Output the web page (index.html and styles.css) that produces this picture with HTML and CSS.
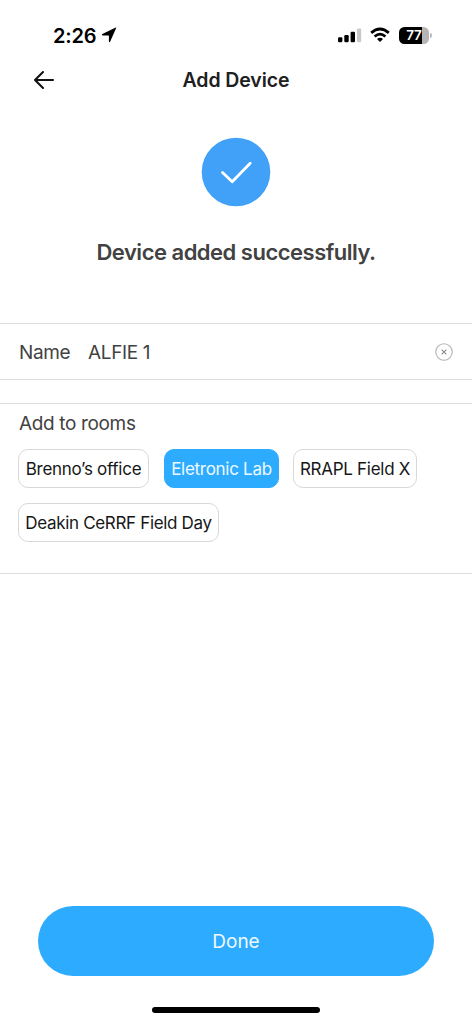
FILE: index.html
```html
<!DOCTYPE html>
<html lang="en">
<head>
<meta charset="utf-8">
<title>Add Device</title>
<link rel="stylesheet" href="styles.css">
</head>
<body>
<main class="screen">
  <div class="status">
    <span class="time">2:26</span>
    <svg class="location" width="16" height="16" viewBox="0 0 16 16"><path d="M15.2.9 9.2 14.6Q8.4 16 7.9 14.6V8.5H1.6Q0 8 1.4 7.1L14.2.7Q15.7.1 15.2.9Z"/></svg>
    <span class="spacer"></span>
    <svg class="signal" width="24" height="16" viewBox="0 0 24 16"><rect x="0" y="10.3" width="4.4" height="5" rx="1.2"/><rect x="6.3" y="8" width="4.4" height="7.3" rx="1.2"/><rect x="12.6" y="4.7" width="4.4" height="10.6" rx="1.2"/><rect class="faint" x="19" y="1.5" width="4.2" height="13.8" rx="1.2"/></svg>
    <svg class="wifi" width="20" height="16" viewBox="0 0 20 16"><path class="wave" d="M1.2 5.9Q10-1.8 18.8 5.9M4.6 9.5Q10 4.7 15.4 9.5"/><path d="M7 12.1Q10 9.3 13 12.1L10 15.1Z"/></svg>
    <div class="battery"><span>77</span></div>
    <i class="battery-tip"></i>
  </div>
  <header class="nav">
    <svg class="back" width="22" height="20" viewBox="0 0 22 20"><path d="M20 10H2M10 2 2 10l8 8"/></svg>
    <h1>Add Device</h1>
  </header>
  <section class="success">
    <svg class="check" width="70" height="70" viewBox="0 0 70 70"><circle cx="35" cy="35" r="34.3"/><path d="m21.5 35.5 9.7 9.3L49.2 26.2"/></svg>
    <h2>Device added successfully.</h2>
  </section>
  <section class="name-row">
    <label>Name</label>
    <span class="value">ALFIE 1</span>
    <svg class="clear" width="18" height="18" viewBox="0 0 18 18"><circle cx="9" cy="9" r="8.2"/><path d="m6.6 6.6 4.8 4.8m0-4.8-4.8 4.8"/></svg>
  </section>
  <section class="rooms">
    <h3>Add to rooms</h3>
    <div class="chips">
      <button class="chip brenno">Brenno’s office</button>
      <button class="chip selected">Eletronic Lab</button>
      <button class="chip field">RRAPL Field X</button>
      <button class="chip deakin">Deakin CeRRF Field Day</button>
    </div>
  </section>
  <footer class="footer">
    <button class="done">Done</button>
    <div class="home-bar"></div>
  </footer>
</main>
</body>
</html>
```
FILE: styles.css
```css
* { box-sizing: border-box; }
body { margin: 0; background: #fff; font-family: Inter, "Liberation Sans", sans-serif; color: #424242; }
button { font-family: inherit; padding: 0; }
h1, h2, h3 { margin: 0; }
svg { display: block; flex: none; }
.screen { width: 472px; height: 1023px; display: flex; flex-direction: column; overflow: hidden; }

.status { height: 58px; padding: 12px 40px 0 53px; display: flex; align-items: center; color: #000; }
.time { font-size: 20px; font-weight: 600; letter-spacing: -.2px; width: 48px; padding-top: 1px; white-space: nowrap; }
.spacer { flex: 1; }
.signal { margin-right: 8px; }
.faint { fill: #c9c9c9; }
.wifi { margin-right: 9px; }
.wave { fill: none; stroke: #000; stroke-width: 2.8; }
.battery { width: 30px; height: 17px; border-radius: 5.5px; background: linear-gradient(90deg, #000 77%, #b5b5b5 77%); color: #fff; font-size: 13.5px; font-weight: 600; line-height: 17px; text-align: center; letter-spacing: -.2px; }
.battery-tip { width: 2px; height: 5px; margin-left: 1px; border-radius: 0 2px 2px 0; background: #bbb; }

.nav { height: 44px; display: grid; grid-template-columns: 64px 1fr 64px; align-items: center; }
.back { margin-left: 33px; fill: none; stroke: #111; stroke-width: 2.1; stroke-linecap: round; stroke-linejoin: round; }
h1 { font-size: 19.5px; font-weight: 600; text-align: center; color: #202020; letter-spacing: -.1px; line-height: 24px; }

.success { height: 221px; padding-top: 35px; display: flex; flex-direction: column; align-items: center; }
.check { fill: #41a1f8; }
.check path { fill: none; stroke: #fff; stroke-width: 2.8; stroke-linecap: round; stroke-linejoin: round; }
h2 { margin-top: 31px; font-size: 22px; font-weight: 600; letter-spacing: -.5px; line-height: 28px; white-space: nowrap; }

.name-row { height: 57px; border-top: 1px solid #dedede; border-bottom: 1px solid #dedede; padding: 0 19px; display: flex; align-items: center; font-size: 19px; letter-spacing: -.35px; white-space: nowrap; }
.name-row label { width: 69px; padding-top: 1px; }
.value { flex: 1; padding-top: 1px; }
.clear { fill: none; stroke: #b3b3b3; stroke-width: 1.1; }
.clear path { stroke: #888; }

.rooms { height: 171px; margin-top: 23px; border-top: 1px solid #dedede; border-bottom: 1px solid #dedede; padding: 8px 18px; }
h3 { font-size: 19px; font-weight: 400; letter-spacing: -.35px; line-height: 24px; padding-left: 1px; white-space: nowrap; }
.chips { margin-top: 13px; display: flex; flex-wrap: wrap; gap: 15px; }
.chip { height: 39px; border: 1px solid #d8d8d8; border-radius: 10px; background: #fff; color: #171717; font-size: 17px; letter-spacing: -.28px; white-space: nowrap; }
.brenno { width: 131px; }
.selected { width: 115px; background: #2dacff; border-color: #2dacff; color: #eef9ff; }
.field { width: 124px; margin-left: -1px; }
.deakin { width: 201px; letter-spacing: -.33px; }

.footer { margin-top: auto; height: 117px; display: flex; flex-direction: column; align-items: center; }
.done { width: 396px; height: 70px; padding-top: 1px; border: 0; border-radius: 35px; background: #2dacff; color: #eef9ff; font-size: 19px; }
.home-bar { margin-top: 31px; width: 168px; height: 6px; border-radius: 3px; background: #000; }
```
